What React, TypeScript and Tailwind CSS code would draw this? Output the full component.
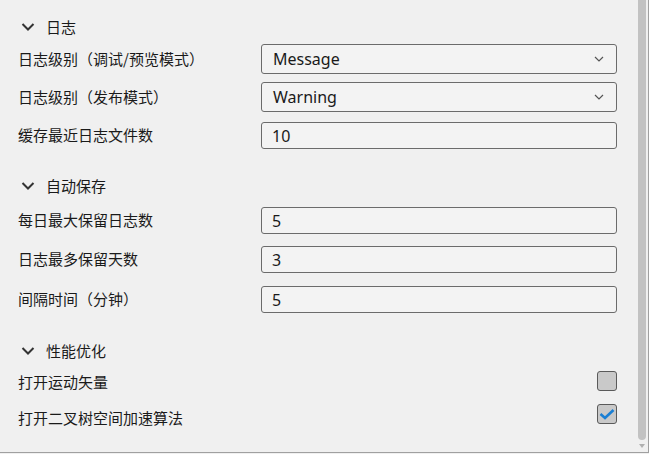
import React from "react";

const cjk = { fontFamily: '"Noto Sans CJK SC", "Noto Sans", sans-serif' };
const latin = { fontFamily: '"Noto Sans", "Noto Sans CJK SC", sans-serif' };

function SectionHeader({ title, className }: { title: string; className: string }) {
  return (
    <div className={`flex items-center h-[30px] ${className}`}>
      <svg width="14" height="10" viewBox="0 0 14 10" className="ml-[3px]">
        <path d="M1.5 2 L7 7.5 L12.5 2" fill="none" stroke="#333" strokeWidth="2" />
      </svg>
      <span className="ml-[11px] text-[15px] text-[#1a1a1a]" style={cjk}>
        {title}
      </span>
    </div>
  );
}

function Label({ text, className = "" }: { text: string; className?: string }) {
  return (
    <span className={`w-[243px] shrink-0 text-[15px] text-[#1a1a1a] ${className}`} style={cjk}>
      {text}
    </span>
  );
}

function SelectRow({ label, value, className }: { label: string; value: string; className: string }) {
  return (
    <div className={`flex items-center h-[30px] ${className}`}>
      <Label text={label} />
      <div className="flex-1 h-full flex items-center justify-between border border-[#6b6b6b] rounded-[3px] bg-[#f3f3f3] pl-[11px] pr-[12px]">
        <span className="text-[16px] text-[#1a1a1a]" style={latin}>
          {value}
        </span>
        <svg width="10" height="6" viewBox="0 0 10 6">
          <path d="M1 1 L5 5 L9 1" fill="none" stroke="#555" strokeWidth="1.2" />
        </svg>
      </div>
    </div>
  );
}

function InputRow({ label, value, className }: { label: string; value: string; className: string }) {
  return (
    <div className={`flex items-center h-[27px] ${className}`}>
      <Label text={label} />
      <div className="flex-1 h-full flex items-center border border-[#6b6b6b] rounded-[3px] bg-[#f3f3f3] pl-[10px]">
        <span className="text-[16px] text-[#1a1a1a]" style={latin}>
          {value}
        </span>
      </div>
    </div>
  );
}

function CheckRow({ label, checked, className, labelClass }: { label: string; checked: boolean; className: string; labelClass: string }) {
  return (
    <div className={`flex items-center h-[20px] ${className}`}>
      <Label text={label} className={labelClass} />
      <div className="flex-1 flex justify-end">
        <div className="w-[20px] h-[20px] border border-[#5a5a5a] rounded-[3px] bg-[#c9c9c9] flex items-center justify-center">
          {checked && (
            <svg width="16" height="12" viewBox="0 0 16 12">
              <path d="M1.5 6 L6 10 L14.5 2" fill="none" stroke="#1a7fd4" strokeWidth="2.6" />
            </svg>
          )}
        </div>
      </div>
    </div>
  );
}

export default function App() {
  return (
    <div className="w-[649px] h-[454px] bg-[#f0f0f0] overflow-hidden">
      <div className="flex h-[453px] border-b border-[#a0a0a0]">
        <div className="flex-1 flex flex-col pl-[18px] pr-[21px] pt-[12px]">
          <SectionHeader title="日志" className="" />
          <SelectRow label="日志级别（调试/预览模式）" value="Message" className="mt-[2px]" />
          <SelectRow label="日志级别（发布模式）" value="Warning" className="mt-[8px]" />
          <InputRow label="缓存最近日志文件数" value="10" className="mt-[10px]" />

          <SectionHeader title="自动保存" className="mt-[22px]" />
          <InputRow label="每日最大保留日志数" value="5" className="mt-[6px]" />
          <InputRow label="日志最多保留天数" value="3" className="mt-[12px]" />
          <InputRow label="间隔时间（分钟）" value="5" className="mt-[13px]" />

          <SectionHeader title="性能优化" className="mt-[23px]" />
          <CheckRow label="打开运动矢量" checked={false} className="mt-[5px]" labelClass="pt-[3px]" />
          <CheckRow label="打开二叉树空间加速算法" checked={true} className="mt-[13px]" labelClass="pt-[8px]" />
        </div>
        <div className="w-[11px] flex border-r border-[#a0a0a0]">
          <div className="w-[8px] flex flex-col items-center">
            <div className="w-[8px] h-[440px] bg-[#c2c2c2] rounded-b-[4px]" />
            <svg width="8" height="6" viewBox="0 0 8 6" className="mt-[3px]">
              <path d="M1 1 L7 1 L4 5 Z" fill="#b0b0b0" />
            </svg>
          </div>
        </div>
      </div>
    </div>
  );
}
